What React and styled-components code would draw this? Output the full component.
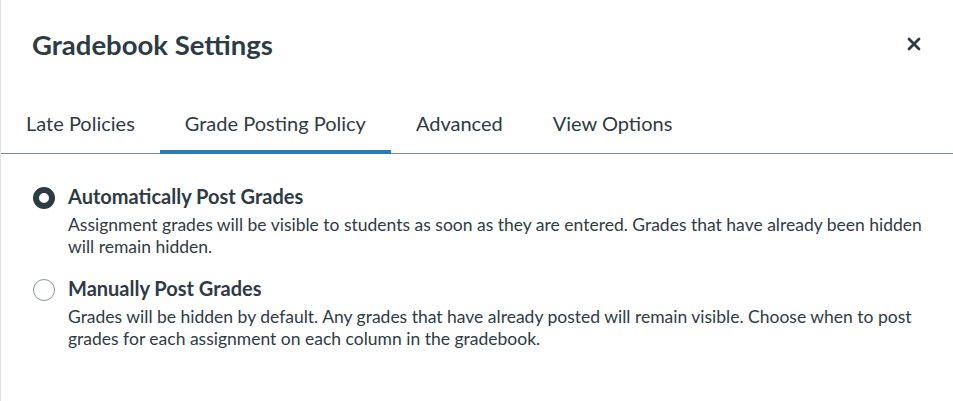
import React from "react";
import styled, { createGlobalStyle } from "styled-components";

const GlobalStyle = createGlobalStyle`
  body {
    margin: 0;
    background: #ffffff;
    font-family: Lato, "Noto Sans", "Liberation Sans", sans-serif;
    color: #2d3b45;
  }
`;

const Modal = styled.div`
  width: 953px;
  height: 401px;
  box-sizing: border-box;
  border-left: 1px solid #dfe2e4;
  overflow: hidden;
`;

const Header = styled.div`
  display: flex;
  align-items: center;
  justify-content: space-between;
  height: 92px;
  padding: 0 27px 4px 31px;
  box-sizing: border-box;
`;

const Title = styled.h1`
  margin: 0;
  font-size: 27.5px;
  font-weight: 700;
  line-height: 35px;
`;

const CloseButton = styled.button`
  display: flex;
  align-items: center;
  justify-content: center;
  width: 24px;
  height: 24px;
  padding: 0;
  border: none;
  background: none;
  color: #2d3b45;
  cursor: pointer;
`;

const TabList = styled.div`
  display: flex;
  border-bottom: 1px solid #7f8c96;
`;

const Tab = styled.div`
  padding: 4px 25px 0;
  height: 62px;
  box-sizing: border-box;
  display: flex;
  align-items: center;
  font-size: 20px;
  line-height: 26px;
  border-bottom: 4px solid ${(p) => (p.active ? "#2b7abc" : "transparent")};
  margin-bottom: -1px;
  cursor: pointer;
`;

const Body = styled.div`
  padding: 30px 28px 0 32px;
  display: flex;
  flex-direction: column;
  gap: 18px;
`;

const Option = styled.label`
  display: flex;
  align-items: flex-start;
  gap: 13px;
`;

const Radio = styled.span`
  flex: none;
  width: 22px;
  height: 22px;
  box-sizing: border-box;
  border-radius: 50%;
  margin-top: 3px;
  border: ${(p) => (p.checked ? "6px solid #2d3b45" : "1px solid #8b969e")};
  background: #ffffff;
`;

const OptionText = styled.div`
  display: flex;
  flex-direction: column;
`;

const OptionLabel = styled.span`
  font-size: 20px;
  font-weight: 700;
  line-height: 24px;
`;

const OptionDesc = styled.span`
  margin-top: 6px;
  font-size: 17.5px;
  line-height: 22px;
`;

const tabs = ["Late Policies", "Grade Posting Policy", "Advanced", "View Options"];

export default function App() {
  return (
    <Modal>
      <GlobalStyle />
      <Header>
        <Title>Gradebook Settings</Title>
        <CloseButton aria-label="Close">
          <svg width="14" height="14" viewBox="0 0 14 14">
            <path d="M2 2 L12 12 M12 2 L2 12" stroke="currentColor" strokeWidth="2.8" strokeLinecap="round" />
          </svg>
        </CloseButton>
      </Header>
      <TabList>
        {tabs.map((t) => (
          <Tab key={t} active={t === "Grade Posting Policy"}>
            {t}
          </Tab>
        ))}
      </TabList>
      <Body>
        <Option>
          <Radio checked />
          <OptionText>
            <OptionLabel>Automatically Post Grades</OptionLabel>
            <OptionDesc>
              Assignment grades will be visible to students as soon as they are entered. Grades that have already been hidden
              will remain hidden.
            </OptionDesc>
          </OptionText>
        </Option>
        <Option>
          <Radio />
          <OptionText>
            <OptionLabel>Manually Post Grades</OptionLabel>
            <OptionDesc>
              Grades will be hidden by default. Any grades that have already posted will remain visible. Choose when to post
              grades for each assignment on each column in the gradebook.
            </OptionDesc>
          </OptionText>
        </Option>
      </Body>
    </Modal>
  );
}
